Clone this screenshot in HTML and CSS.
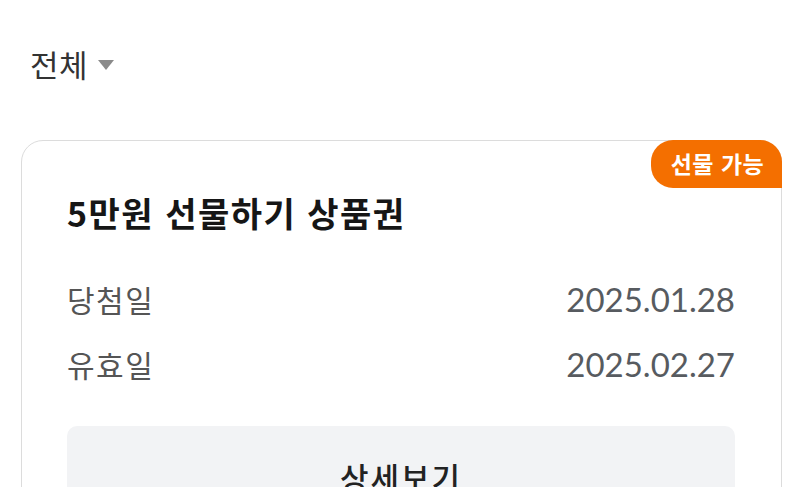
FILE: index.html
```html
<!DOCTYPE html>
<html lang="ko">
<head>
<meta charset="utf-8">
<link rel="stylesheet" href="styles.css">
</head>
<body>
<div class="page">
  <div class="filter">
    <span class="filter-label">전체</span>
    <span class="caret"></span>
  </div>
  <div class="card">
    <div class="badge">선물 가능</div>
    <div class="title">5만원 선물하기 상품권</div>
    <div class="rows">
      <div class="row"><span class="label">당첨일</span><span class="date">2025.01.28</span></div>
      <div class="row"><span class="label">유효일</span><span class="date">2025.02.27</span></div>
    </div>
    <div class="btn">상세보기</div>
  </div>
</div>
</body>
</html>
```
FILE: styles.css
```css
* { box-sizing: border-box; }
html, body { margin: 0; padding: 0; background: #fff; }
body {
  font-family: "Noto Sans CJK KR", "Noto Sans", sans-serif;
  width: 800px;
  height: 487px;
  overflow: hidden;
}
.page { padding: 44px 18px 0 21px; }
.filter {
  display: flex;
  align-items: center;
  gap: 10px;
  padding-left: 9px;
  height: 40px;
}
.filter-label {
  font-size: 31px;
  line-height: 40px;
  letter-spacing: 0.5px;
  color: #333;
}
.caret {
  width: 0; height: 0;
  border-left: 8px solid transparent;
  border-right: 8px solid transparent;
  border-top: 10px solid #8a8a8a;
  margin-top: 2px;
}
.card {
  position: relative;
  margin-top: 56px;
  border: 1px solid #dcdcdc;
  border-radius: 22px;
  padding: 52px 46px 0 45px;
  height: 400px;
}
.badge {
  position: absolute;
  top: -1px;
  right: -1px;
  width: 131px;
  height: 48px;
  background: #f46f00;
  color: #fff;
  font-size: 23px;
  font-weight: 700;
  letter-spacing: 0.5px;
  display: flex;
  align-items: center;
  justify-content: center;
  border-radius: 22px 22px 0 22px;
  padding: 0 0 2px 2px;
}
.title {
  font-size: 34px;
  font-weight: 700;
  letter-spacing: 1.5px;
  color: #161616;
  line-height: 40px;
}
.rows {
  margin-top: 46px;
  display: flex;
  flex-direction: column;
  gap: 25px;
}
.row {
  display: flex;
  justify-content: space-between;
  align-items: center;
  height: 40px;
}
.label {
  font-size: 30px;
  letter-spacing: 1.5px;
  color: #555;
}
.date {
  font-family: Lato, "Noto Sans", sans-serif;
  font-size: 33px;
  color: #575b60;
}
.btn {
  margin-top: 42px;
  height: 100px;
  background: #f2f3f5;
  border-radius: 10px;
  display: flex;
  align-items: center;
  justify-content: center;
  font-size: 31px;
  font-weight: 500;
  letter-spacing: 2px;
  color: #222;
}
```
